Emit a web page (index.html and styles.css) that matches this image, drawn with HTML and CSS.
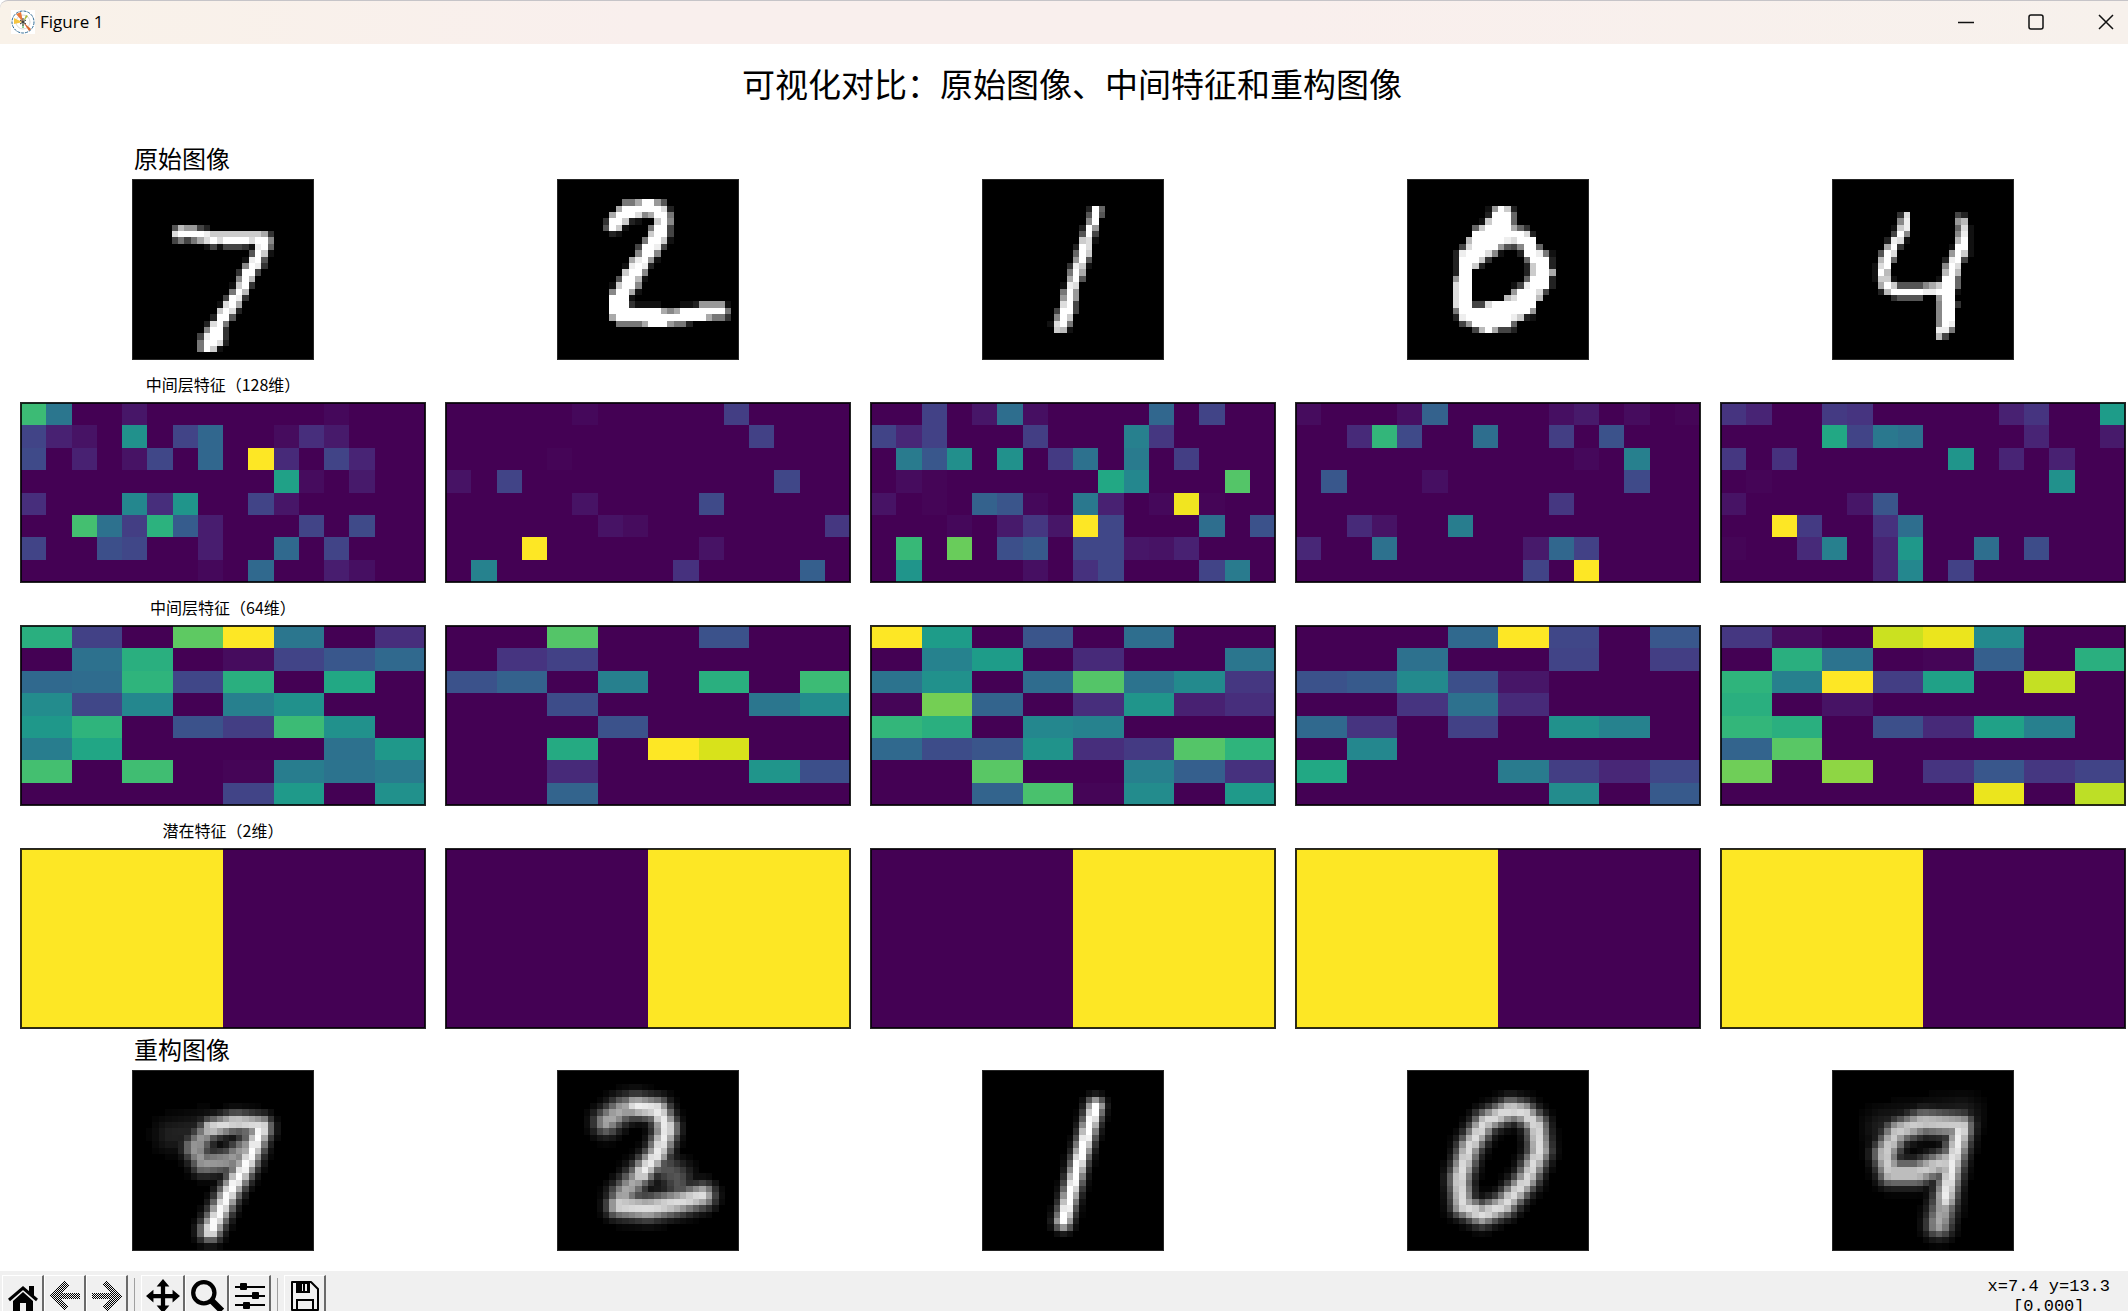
FILE: index.html
```html
<!DOCTYPE html>
<html lang="zh-CN">
<head>
<meta charset="utf-8">
<title>Figure 1</title>
<link rel="stylesheet" href="styles.css">
</head>
<body>
<header class="titlebar">
  <svg class="app-icon" viewBox="0 0 24 24" aria-hidden="true">
    <rect width="24" height="24" fill="#fff"/>
    <circle cx="12" cy="12" r="11" fill="#fff" stroke="#2f6a94" stroke-dasharray="3 1"/>
    <circle cx="12" cy="12" r="7" fill="none" stroke="#d8d8d8"/>
    <path d="M12 12L5 4l5-2z" fill="#e8793a"/>
    <path d="M12 12l-9 2V8l4 2z" fill="#f5c542"/>
    <path d="M12 12l6 9 2-2z" fill="#d9682c"/>
    <path d="M12 12l3-7 2 1z" fill="#a9b93a"/>
    <path d="M12 12l-1 6h2z" fill="#7fd08a"/>
    <path d="M9 10l6 4M15 10l-6 4M12 8v8" stroke="#333"/>
  </svg>
  <h1 class="window-title">Figure 1</h1>
  <div class="window-buttons">
    <button type="button" aria-label="Minimize"><svg viewBox="0 0 16 16"><path d="M0 8.500h16"/></svg></button>
    <button type="button" aria-label="Maximize"><svg viewBox="0 0 16 16"><rect x="1" y="1" width="14" height="14" rx="2"/></svg></button>
    <button type="button" aria-label="Close"><svg viewBox="0 0 16 16"><path d="M1 1l14 14M15 1L1 15"/></svg></button>
  </div>
</header>

<main class="figure">
  <h2 class="suptitle">可视化对比：原始图像、中间特征和重构图像</h2>
  <section class="plots" data-set="original"><h3 class="label label-large">原始图像</h3></section>
  <section class="plots" data-set="hidden128"><h3 class="label">中间层特征（128维）</h3></section>
  <section class="plots" data-set="hidden64"><h3 class="label">中间层特征（64维）</h3></section>
  <section class="plots" data-set="latent"><h3 class="label">潜在特征（2维）</h3></section>
  <section class="plots" data-set="rebuilt"><h3 class="label label-large">重构图像</h3></section>
</main>

<footer class="toolbar">
  <button type="button" class="tool" aria-label="Home"><svg viewBox="0 0 32 32"><path d="M2 20L16 8l14 12" fill="none" stroke="#000" stroke-width="3"/><path d="M22 6h5v11l-5-4z"/><path d="M16 12l10 9v10h-7v-8h-6v8H6V21z"/></svg></button>
  <button type="button" class="tool" aria-label="Back" disabled><svg viewBox="0 0 32 32" shape-rendering="crispEdges"><defs><pattern id="dither" width="2" height="2" patternUnits="userSpaceOnUse"><path d="M0 0h1v1H0zM1 1h1v1H1z"/></pattern></defs><path d="M18 3L5 16l13 13M6 16h25" fill="none" stroke="url(#dither)" stroke-width="6"/></svg></button>
  <button type="button" class="tool" aria-label="Forward" disabled><svg viewBox="0 0 32 32" shape-rendering="crispEdges"><path d="M14 3l13 13-13 13M26 16H1" fill="none" stroke="url(#dither)" stroke-width="6"/></svg></button>
  <span class="separator"></span>
  <button type="button" class="tool tool-wide" aria-label="Pan"><svg viewBox="0 0 32 32"><path d="M16 0l6 7h-4v7h7v-4l7 6-7 6v-4h-7v7h4l-6 7-6-7h4v-7H7v4l-7-6 7-6v4h7V7h-4z"/></svg></button>
  <button type="button" class="tool tool-wide" aria-label="Zoom"><svg viewBox="0 0 32 32"><circle cx="13" cy="13" r="10" fill="none" stroke="#000" stroke-width="4"/><path d="M20 20l10 10" stroke="#000" stroke-width="6"/></svg></button>
  <button type="button" class="tool" aria-label="Subplots"><svg viewBox="0 0 32 32"><path d="M1 6h30v2H1zM1 15h30v2H1zM1 24h30v2H1z"/><rect x="6" y="3" width="7" height="7" rx="1"/><rect x="18" y="12" width="7" height="7" rx="1"/><rect x="9" y="22" width="7" height="7" rx="1"/></svg></button>
  <span class="separator"></span>
  <button type="button" class="tool" aria-label="Save"><svg viewBox="0 0 32 32"><path d="M3 2h19l7 7v21H3z" fill="none" stroke="#000" stroke-width="2" stroke-linejoin="round"/><path d="M7 2h14v11H7z"/><path d="M13 4h5v7h-5z" fill="#f0f0f0"/><path d="M14 4h2v7h-2z" fill="#000"/><path d="M8 30V20h16v10" fill="none" stroke="#000" stroke-width="2"/></svg></button>
  <output class="coords">x=7.4 y=13.3<br>[0.000]</output>
</footer>
<script src="plots.js"></script>
</body>
</html>
```
FILE: styles.css
```css
* { box-sizing: border-box; }

body {
  margin: 0;
  height: 100vh;
  overflow: hidden;
  background: #fff;
  color: #000;
  font-family: "Noto Sans CJK SC", sans-serif;
}

h1, h2, h3 { margin: 0; font-weight: 400; }

.titlebar {
  display: flex;
  align-items: center;
  height: 44px;
  padding: 0 0 2px 11px;
  border-top: 1px solid #c6c4c8;
  border-radius: 8px 0 0 0;
  background: linear-gradient(90deg, #f9f2e9, #f9efed 30%, #f9efed 60%, #f7f1ec);
}
.app-icon { width: 24px; height: 24px; }
.window-title {
  flex: 1;
  margin-left: 5px;
  font: 17px/24px "Open Sans", sans-serif;
}
.window-buttons { display: flex; gap: 26px; }
.window-buttons button {
  display: grid;
  place-items: center;
  width: 44px;
  height: 41px;
  padding: 0;
  border: 0;
  background: none;
}
.window-buttons svg { width: 16px; height: 16px; fill: none; stroke: #111; stroke-width: 1.5; }

.figure { padding: 0 2px 20px 20px; }
.suptitle {
  height: 94px;
  padding-right: 2px;
  text-align: center;
  font-size: 33px;
  line-height: 78px;
}

.plots {
  display: grid;
  grid-template-columns: repeat(5, 1fr);
  column-gap: 19px;
}
.label {
  grid-column: 1;
  height: 42px;
  text-align: center;
  font-size: 16px;
  line-height: 48px;
}
.label-large {
  height: 41px;
  padding-left: 114px;
  text-align: left;
  font-size: 24px;
  line-height: 40px;
}
.plot { grid-row: 2; justify-self: center; display: block; border: 1px solid #262626; }
.plot-map {
  width: 100%;
  aspect-ratio: 406 / 181;
  outline: 1px solid #000c;
  outline-offset: -2px;
}
.plot-digit { width: 44.8%; aspect-ratio: 182 / 181; }

.toolbar {
  display: flex;
  align-items: flex-start;
  height: 56px;
  padding: 4px 18px 4px 2px;
  background: #f0f0f0;
}
.tool {
  display: grid;
  place-items: center;
  width: 42px;
  height: 44px;
  padding: 0;
  border: solid;
  border-width: 1px 2px 2px 1px;
  border-color: #fff #6a6a6a #6a6a6a #fff;
  background: #f0f0f0;
}
.tool-wide { width: 44px; }
.tool svg { width: 32px; height: 32px; }
.tool-wide svg { width: 34px; height: 34px; }
.separator { width: 1px; height: 40px; margin: 3px 6px; background: #a0a0a0; }
.coords {
  margin-left: auto;
  padding-top: 2px;
  text-align: center;
  font: 17px/20px "Liberation Mono", monospace;
}
```
FILE: plots.js
```js
// Viridis colour map, sampled every 5 %.
const VIRIDIS = ["440154", "471365", "482475", "463480", "414487", "3b528b", "355f8d",
  "2f6c8e", "2a788e", "25858e", "21918c", "1e9c89", "22a884", "2fb47c", "44bf70",
  "5ec962", "7ad151", "9bd93c", "bddf26", "dfe318", "fde725"];

function viridis(percent) {
  const pos = percent / 5;
  const low = Math.min(Math.floor(pos), 19);
  const part = (hex, i) => parseInt(hex.slice(i, i + 2), 16);
  const mix = [0, 2, 4].map(i => Math.round(
    part(VIRIDIS[low], i) + (part(VIRIDIS[low + 1], i) - part(VIRIDIS[low], i)) * (pos - low)));
  return `rgb(${mix})`;
}

// Activations in percent: one line per row, "column:value" for the active units.
const hidden128 = [
  `0:68 1:39 4:6 12:2
0:20 1:9 2:5 4:50 6:20 7:33 10:3 11:13 12:7
0:22 2:9 4:5 5:21 7:33 9:100 10:12 12:20 13:10
10:57 11:3 13:7
0:13 4:46 5:13 6:52 9:20 10:6
2:70 3:37 4:18 5:64 6:29 7:8 11:20 13:22
0:20 3:24 4:21 7:8 10:34 12:20
7:2 9:34 12:8 13:4`,
  `5:2 11:18
12:19
4:1
0:5 2:20 13:21
5:5 10:22
6:5 7:3 15:16
3:100 10:5
1:44 9:14 14:30`,
  `2:19 4:6 5:36 6:4 11:33 13:20
0:20 1:11 2:19 6:18 10:43 11:16
1:41 2:27 3:49 5:50 7:17 8:37 10:41 12:18
1:3 2:1 9:60 10:46 14:73
0:5 2:1 4:31 5:26 6:2 8:40 9:9 11:2 12:98 13:1
3:2 5:7 6:16 7:6 8:100 9:21 13:36 15:25
1:67 3:77 5:24 6:28 8:21 9:21 10:6 11:5 12:9
1:52 6:4 8:14 9:21 13:20 14:41`,
  `0:3 4:4 5:31 10:4 11:7 13:3 15:1
2:12 3:66 4:22 7:36 10:18 12:25
11:2 13:43
1:27 5:4 13:22
10:16
2:12 3:5 6:42
0:11 3:37 9:7 10:33 11:19
9:20 11:100`,
  `0:15 1:10 4:17 5:15 11:9 12:15 15:55
4:60 5:20 6:40 7:37 12:10 15:7
0:16 2:14 9:52 11:10 13:9
1:1 13:50
0:5 5:6 6:26
2:100 3:17 6:14 7:36
0:1 3:12 4:43 6:10 7:53 10:36 12:23
6:10 7:46 9:19`
].map(map => map.split("\n").map(line => {
  const row = Array(16).fill(0);
  line.split(" ").forEach(cell => { const [c, v] = cell.split(":"); row[c] = +v; });
  return row;
}));

const hidden64 = [
  [[63,19,0,75,100,39,0,13],[0,37,63,0,3,20,27,34],[34,35,65,21,63,0,60,0],[48,21,46,0,43,50,0,0],
   [53,65,0,25,18,68,50,0],[42,59,0,0,0,0,37,53],[70,0,69,0,1,42,38,41],[0,0,0,0,20,54,0,50]],
  [[0,0,73,0,0,25,0,0],[0,15,19,0,0,0,0,0],[25,31,0,43,0,63,0,68],[0,0,23,0,0,0,39,48],
   [0,0,0,25,0,0,0,0],[0,0,61,0,100,94,0,0],[0,0,12,0,0,0,52,24],[0,0,32,0,0,0,0,0]],
  [[100,55,0,26,0,36,0,0],[0,44,55,0,12,0,0,39],[38,50,0,35,73,38,47,16],[1,79,32,0,13,52,9,13],
   [66,63,0,46,44,0,0,0],[34,23,26,51,13,17,73,65],[0,0,74,0,0,43,30,14],[0,0,32,71,1,48,0,54]],
  [[0,0,0,34,100,21,0,27],[0,0,37,0,0,20,0,18],[25,28,47,24,6,0,0,0],[0,0,15,37,12,0,0,0],
   [34,15,0,19,0,50,44,0],[0,46,0,0,0,0,0,0],[60,0,0,0,41,18,11,21],[0,0,0,0,0,48,0,28]],
  [[16,3,0,92,97,47,0,0],[0,63,38,0,1,30,0,63],[65,43,100,18,57,0,91,0],[63,0,5,0,0,0,0,0],
   [66,63,0,24,12,57,43,0],[32,74,0,0,0,0,0,0],[78,0,83,0,15,27,16,20],[0,0,0,0,0,97,0,90]]
];

const latent = [[[100, 0]], [[0, 100]], [[0, 100]], [[100, 0]], [[100, 0]]];

// Digits on a 28x28 grid: "row.column.grey levels in hex", one token per run.
const original = [
  `7.6.5b9942 8.6.dffffecccccccca3 9.6.4747adfdffffdff8 10.11.14144431ef6 11.18.5fc1 12.17.1ef5
13.17.8fe3 14.16.3ff4 15.16.8fb0 16.15.1cf3 17.15.7fb 18.14.4fe3 19.13.1dfa 20.12.0cfd2 21.12.2ff5
22.11.2df7 23.11.8ff3 24.10.4eff3 25.10.7ffd2 26.10.7fc1`,
  `3.10.77aff95 4.9.affffffd2 5.8.afffd8aff7 6.7.3ffc2100cf8 7.7.5fc10007ff4 8.8.210000cff4
9.13.7ffc1 10.12.4ffe4 11.12.8ff8 12.11.aef91 13.10.1efe2 14.10.cff8 15.9.5ffb1 16.8.1cff8
17.8.8ffa1 18.8.fff1 19.8.fff3111100011299991 20.8.ffffffffa8afffffff7 21.8.affffffffffffffa773
22.9.7777afff9772`,
  `4.16.2f6 5.16.5f5 6.16.8f 7.15.2f9 8.15.5f4 9.15.cd1 10.14.2fd 11.14.6fc 12.14.9f5 13.13.3ec1
14.13.7fa 15.13.af5 16.12.1ed 17.12.7f9 18.12.9f9 19.12.df4 20.11.4ff4 21.11.8fc 22.10.1df7 23.10.0cb1`,
  `4.12.19fc2 5.12.2fff6 6.11.1cfff6 7.10.6cffffa63 8.10.ffffffffd2 9.9.bfffffedfff
10.8.4dffff9548ff6 11.7.2efffd81002ffe71 12.7.2fffc3000006fff2 13.7.2ffc20000002cff2
14.7.2ff000000002cffa 15.7.9ff000000006fff2 16.7.dff00000014efff2 17.7.dff0000009fffd4
18.7.dff00000bdfffb 19.7.dff44dfffffff 20.7.7fffffffffff9 21.7.2efffffffec21 22.8.49ffffff6 23.10.4bfa442`,
  `5.10.3d 5.19.42 6.10.8e 6.19.9b 7.9.1ce 7.19.6d1 8.9.4f8 8.19.8e1 9.8.2ed1 9.19.bf1 10.8.af3
10.18.1ff1 11.7.5fd 11.18.9fc1 12.7.bf6 12.17.2ef4 13.6.1df 13.17.8fd 14.6.1fb 14.17.bfb
15.6.1cc1 15.16.1ff6 16.7.afc55558acff6 17.7.2bfffffeefff1 18.9.35555 18.16.9ff 19.16.8ff3
20.16.8ff 21.16.8ff 22.16.8fe 23.16.ee7 24.16.b4`
].map(readDigit);

// Decoder output: soft strokes, each "peak, width, points x y on the 28x28 grid".
const rebuilt = [
  [[13, 1.5, 20, 8.5, 16, 8, 12, 9], [9, 1.7, 12, 9, 9.5, 12, 11, 14.5, 15, 14, 18, 11.5],
   [15, 1.6, 20, 9, 18, 14, 15, 19, 12, 25], [2, 2.5, 6, 10, 11, 9]],
  [[10, 1.9, 7.5, 8, 10, 6, 12, 5.5], [14, 1.7, 12, 5.5, 15.5, 6, 17, 9, 15.5, 13, 13, 16],
   [10, 1.9, 13, 16, 10, 19.5], [13, 1.8, 9.5, 21, 14, 21.5, 19, 20.5, 22.5, 19.5],
   [5, 2.2, 15, 14, 18.5, 16.5, 19, 19]],
  [[16, 1.3, 17.5, 5.5, 15, 14, 12.5, 23.5]],
  [[13, 1.7, 16, 6, 12, 8, 9.5, 12, 8, 17, 8.5, 21, 11.5, 22.5, 15, 21, 18.5, 17, 20.5, 12.5, 20, 8.5, 18, 6.5, 16, 6]],
  [[12, 1.8, 20, 8.5, 14, 8, 10, 9.5, 8, 13, 9, 16, 13, 16, 18, 14], [14, 1.7, 20, 9, 18.5, 15, 17.5, 20],
   [10, 1.9, 17.5, 20, 16.5, 24], [2, 3, 8, 9, 20, 7]]
].map(softDigit);

function softDigit(strokes) {
  return Array.from({ length: 28 }, (_, y) => Array.from({ length: 28 }, (_, x) =>
    Math.min(15, Math.max(...strokes.map(([peak, width, ...points]) => {
      const d = strokeDistance(points, x + 0.5, y + 0.5) / width;
      const level = peak * Math.exp(-d * d);
      return level < 0.25 ? 0 : level;
    })))));
}

function strokeDistance(points, x, y) {
  let best = Infinity;
  for (let i = 0; i + 3 < points.length; i += 2) {
    const [ax, ay, bx, by] = points.slice(i, i + 4);
    const dx = bx - ax, dy = by - ay;
    const t = Math.min(1, Math.max(0, ((x - ax) * dx + (y - ay) * dy) / (dx * dx + dy * dy)));
    best = Math.min(best, Math.hypot(x - ax - t * dx, y - ay - t * dy));
  }
  return best;
}

function readDigit(text) {
  const rows = Array.from({ length: 28 }, () => Array(28).fill(0));
  text.split(/\s+/).forEach(run => {
    const [r, c, levels] = run.split(".");
    [...levels].forEach((level, i) => { rows[r][+c + i] = parseInt(level, 16); });
  });
  return rows;
}

function grey(level) {
  const value = Math.round(level * 17);
  return `rgb(${value},${value},${value})`;
}

function draw(rows, colour, kind) {
  const width = rows[0].length, height = rows.length;
  const cells = rows.flatMap((row, y) => row.map((value, x) => value
    ? `<rect x="${x}" y="${y}" width="1" height="1" fill="${colour(value)}"/>` : "")).join("");
  return `<svg class="plot ${kind}" viewBox="0 0 ${width} ${height}" preserveAspectRatio="none"
    shape-rendering="crispEdges"><rect width="${width}" height="${height}" fill="${colour(0)}"/>${cells}</svg>`;
}

const sets = { original, hidden128, hidden64, latent, rebuilt };
document.querySelectorAll(".plots").forEach(section => {
  const name = section.dataset.set;
  const isDigit = name === "original" || name === "rebuilt";
  sets[name].forEach(rows => section.insertAdjacentHTML("beforeend",
    draw(rows, isDigit ? grey : viridis, isDigit ? "plot-digit" : "plot-map")));
});
```
